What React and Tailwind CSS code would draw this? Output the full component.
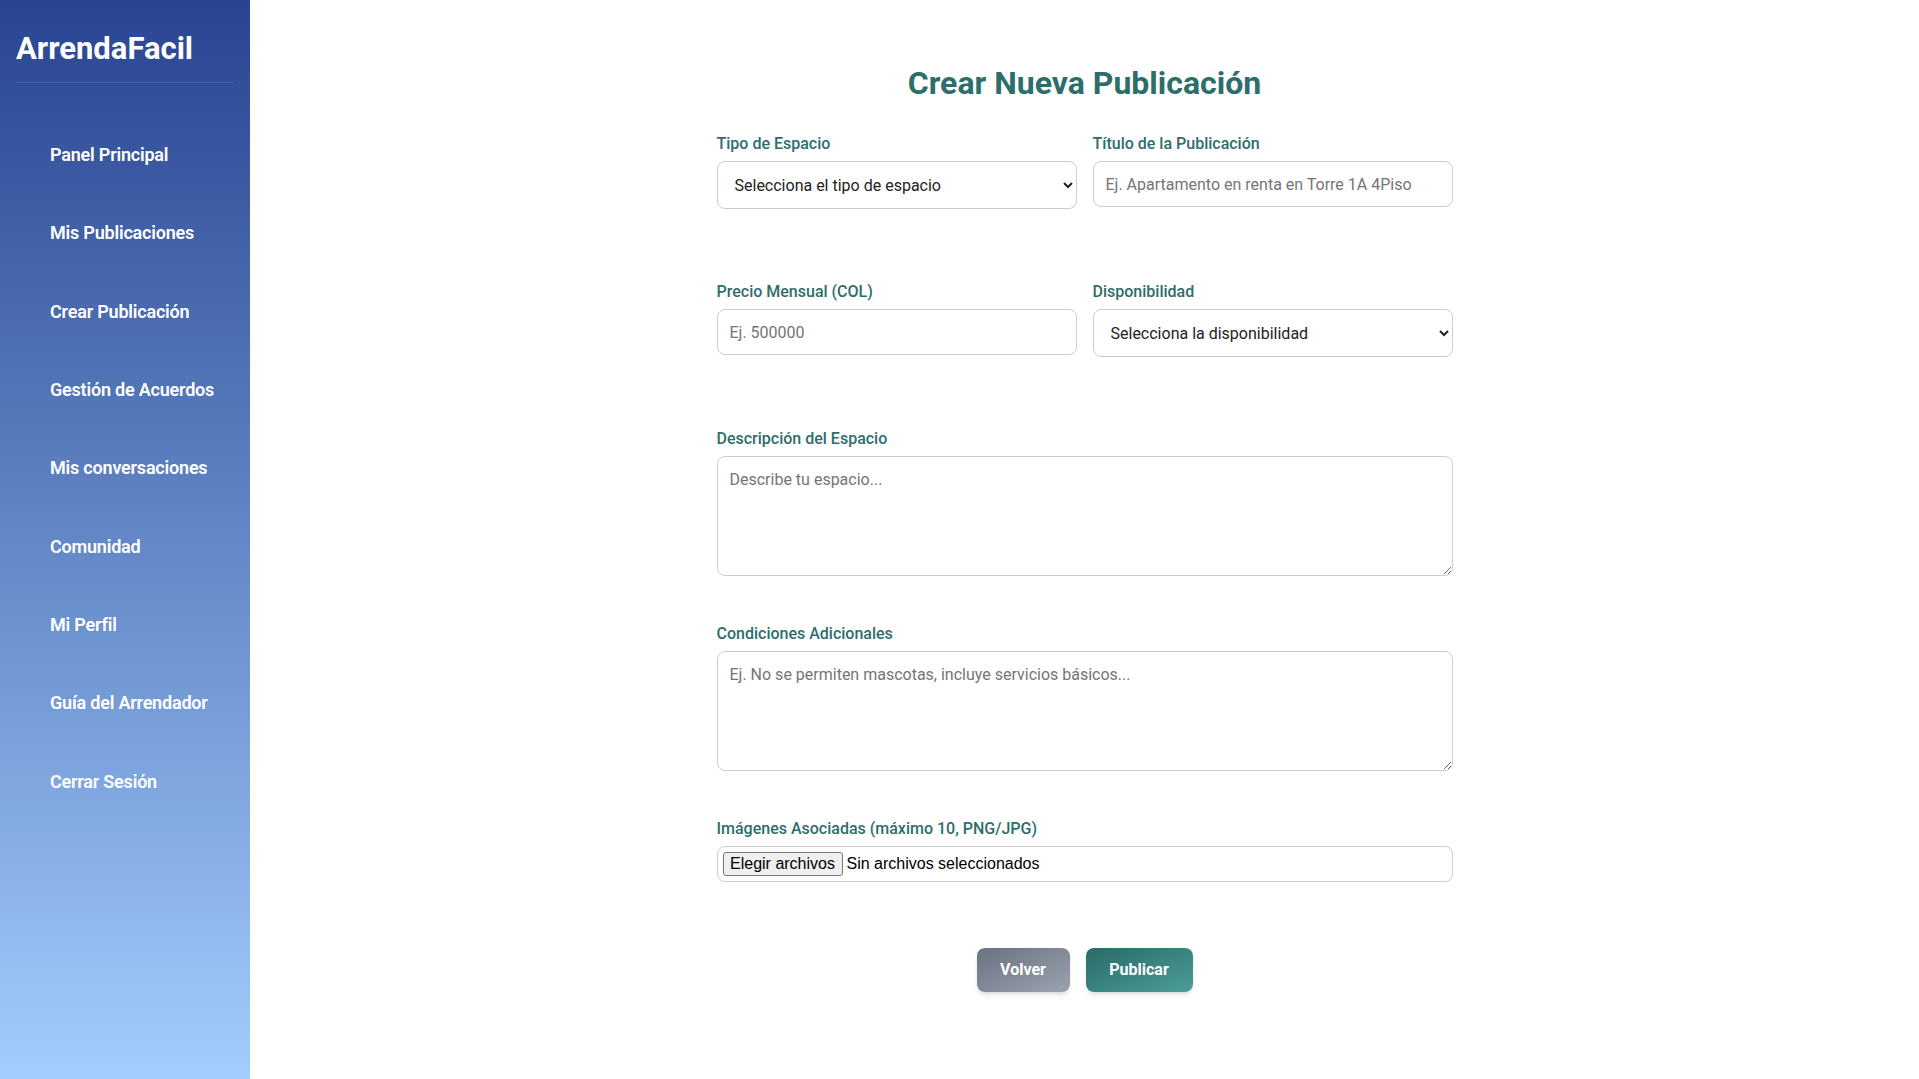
import React from "react";

const NAV_ITEMS = [
  "Panel Principal",
  "Mis Publicaciones",
  "Crear Publicación",
  "Gestión de Acuerdos",
  "Mis conversaciones",
  "Comunidad",
  "Mi Perfil",
  "Guía del Arrendador",
  "Cerrar Sesión",
];

const fieldBase =
  "w-full rounded-lg border border-[#cccccc] bg-white text-[16px] text-[#222] placeholder:text-[#757575] outline-none";

function Sidebar() {
  return (
    <aside className="w-[250px] shrink-0 bg-linear-to-b from-[#2a4491] to-[#a3cdfd] text-white">
      <div className="px-4 pt-[31px]">
        <div className="text-[31px] font-bold leading-[36px]">ArrendaFacil</div>
        <div className="mt-[15px] h-px bg-white/10" />
      </div>
      <nav className="mt-[33px]">
        {NAV_ITEMS.map((label) => (
          <a
            key={label}
            href="#"
            className="flex h-[78.33px] items-center pl-[50px] text-[18px] font-semibold leading-[22px] tracking-[-0.2px]"
          >
            {label}
          </a>
        ))}
      </nav>
    </aside>
  );
}

function Label({ children }) {
  return (
    <label className="mb-[7px] block text-[16px] font-medium leading-[20px] text-[#2d6e6b]">
      {children}
    </label>
  );
}

export default function App() {
  return (
    <div className="flex min-h-screen font-['Roboto',sans-serif]">
      <Sidebar />
      <main className="flex-1 bg-white pt-[64px]">
        <div className="mx-auto w-[736px]">
          <h1 className="mb-[32px] text-center text-[32px] font-bold leading-[38px] text-[#2c6e6a]">
            Crear Nueva Publicación
          </h1>

          <div className="mb-[73px] grid grid-cols-2 items-start gap-x-4">
            <div>
              <Label>Tipo de Espacio</Label>
              <select className={`${fieldBase} h-[48px] pl-[13px] pr-1`} defaultValue="">
                <option value="">Selecciona el tipo de espacio</option>
                <option value="apto">Apartamento</option>
                <option value="casa">Casa</option>
              </select>
            </div>
            <div>
              <Label>Título de la Publicación</Label>
              <input
                type="text"
                placeholder="Ej. Apartamento en renta en Torre 1A 4Piso"
                className={`${fieldBase} h-[46px] px-3`}
              />
            </div>
          </div>

          <div className="mb-[72px] grid grid-cols-2 items-start gap-x-4">
            <div>
              <Label>Precio Mensual (COL)</Label>
              <input type="text" placeholder="Ej. 500000" className={`${fieldBase} h-[46px] px-3`} />
            </div>
            <div>
              <Label>Disponibilidad</Label>
              <select className={`${fieldBase} h-[48px] pl-[13px] pr-1`} defaultValue="">
                <option value="">Selecciona la disponibilidad</option>
                <option value="inmediata">Inmediata</option>
              </select>
            </div>
          </div>

          <div className="mb-[48px]">
            <Label>Descripción del Espacio</Label>
            <textarea
              placeholder="Describe tu espacio..."
              className={`${fieldBase} block h-[120px] px-3 py-[11px] leading-[1.5]`}
            />
          </div>

          <div className="mb-[48px]">
            <Label>Condiciones Adicionales</Label>
            <textarea
              placeholder="Ej. No se permiten mascotas, incluye servicios básicos..."
              className={`${fieldBase} block h-[120px] px-3 py-[11px] leading-[1.5]`}
            />
          </div>

          <div className="mb-[66px]">
            <Label>Imágenes Asociadas (máximo 10, PNG/JPG)</Label>
            <div className="flex h-[36px] items-center rounded-lg border border-[#cccccc] bg-white pl-[5px] font-['Liberation_Sans',Arial,sans-serif] text-[16px] text-black">
              <span className="flex h-[24px] w-[120px] items-center justify-center rounded-[3px] border border-[#767676] bg-[#efefef]">
                Elegir archivos
              </span>
              <span className="ml-[4px]">Sin archivos seleccionados</span>
            </div>
          </div>

          <div className="flex justify-center gap-4">
            <button
              type="button"
              className="h-[44px] w-[93px] rounded-lg bg-linear-to-br from-[#6b7280] to-[#9ca3af] text-[16px] font-bold text-white shadow-md"
            >
              Volver
            </button>
            <button
              type="button"
              className="h-[44px] w-[107px] rounded-lg bg-linear-to-br from-[#2a6b67] to-[#4b9e9a] text-[16px] font-bold text-white shadow-md"
            >
              Publicar
            </button>
          </div>
        </div>
      </main>
    </div>
  );
}
